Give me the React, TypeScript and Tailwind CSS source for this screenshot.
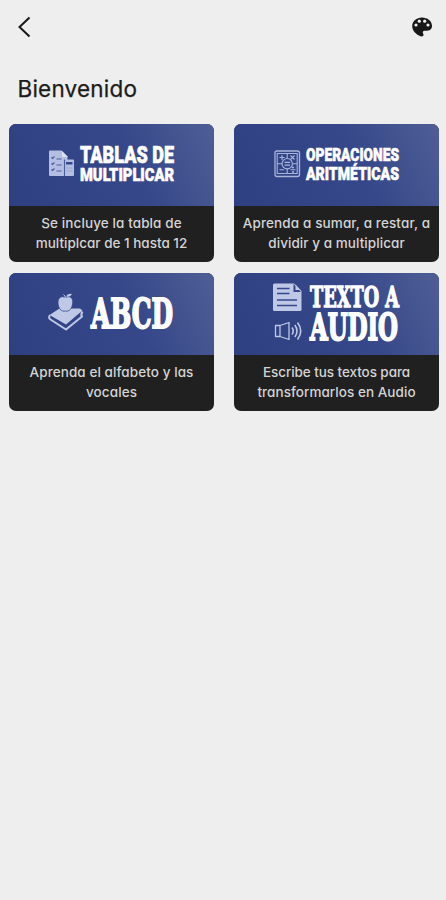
import React from "react";

type LineProps = { x: number; y: number; width: number; size: number; weight?: number; children: string };

function Lettering({ x, y, width, size, weight = 0.6, children }: LineProps) {
  return (
    <text
      x={x}
      y={y}
      textLength={width}
      lengthAdjust="spacingAndGlyphs"
      fontSize={size}
      strokeWidth={weight}
      className="fill-white stroke-white font-['Roboto',sans-serif] font-black"
    >
      {children}
    </text>
  );
}

function SlabLettering({ x, y, width, size, weight = 2, children }: LineProps) {
  return (
    <text
      x={x}
      y={y}
      textLength={width}
      lengthAdjust="spacingAndGlyphs"
      fontSize={size}
      strokeWidth={weight}
      className="fill-white stroke-white font-['DejaVu_Serif',serif] font-bold"
    >
      {children}
    </text>
  );
}

function ChecklistIcon() {
  return (
    <g>
      <path d="M41 26.500h11.500l6 6V36H55v16H41q-1 0-1-1V27.500q0-1 1-1z" fill="#b4bee0" />
      <path d="M53 27v6h6z" fill="#dbe0f2" />
      <path d="M56 35.500h8q1 0 1 1V51q0 1-1 1h-8z" fill="#b4bee0" />
      <path d="M57 38h6.500v2.500H57z" fill="#35478a" />
      <path d="M42.500 33.500l1 1 2-2M42.500 39.500l1 1 2-2M42.500 45.500l1 1 2-2M47.500 35h5M47.500 41h5M47.500 47h5M55.500 35.500V52" stroke="#4a5b99" fill="none" strokeWidth="1.100" />
      <path d="M57.500 44h6M57.500 47h6" stroke="#8f9ccb" strokeDasharray="1.500 .8" />
    </g>
  );
}

function MathIcon() {
  return (
    <g stroke="#a9b5dc" fill="none" strokeWidth="1.100">
      <rect x="41" y="27" width="24.500" height="25.500" rx="2" strokeWidth="1.300" />
      <path d="M53.200 29.500h-10v20h20v-20zM53.200 29.500v5M53.200 45v4.500M43 39.700h5M58.500 39.700h5" />
      <path d="M45.500 33.500h5M48 31v5M56.500 31.500l4 4M60.500 31.500l-4 4M45.500 45.800h4.500M56.500 45.800h5" />
      <circle cx="59" cy="43.500" r=".5" />
      <circle cx="59" cy="48" r=".5" />
      <circle cx="53.200" cy="39.700" r="5.200" fill="#34468a" />
      <path d="M50.500 38.300h5.500M50.500 41.200h5.500" strokeWidth="1.300" />
    </g>
  );
}

function BookIcon() {
  return (
    <g fill="#bfc8e6">
      <path d="M40.500 42L50.500 35.500h20.500l2.500 2-16.500 14z" />
      <path d="M41 42q-2 3 .5 4.500L57 56.500l16-13q-1.500-2 .5-5" fill="none" stroke="#bfc8e6" strokeWidth="2" strokeLinejoin="round" />
      <path d="M56.500 24.500c4-2 7.800 0 7.200 5.500-.5 5.500-3.500 9-7.200 8-4 1-7.200-2.500-7.500-8-.2-5.500 3.500-7.500 7.500-5.500z" stroke="#35478a" strokeWidth=".8" />
      <path d="M56.500 25q-.3-2.500-2-3.500" fill="none" stroke="#bfc8e6" />
      <path d="M57 23.500q1.500-3.500 6-2.500-1.500 3.500-6 2.500z" />
    </g>
  );
}

function DocumentAudioIcon() {
  return (
    <g>
      <path d="M40.500 10.500H60l7.500 7.500v18.500q0 1.500-1.500 1.500H40.500Q39 38 39 36.500V12q0-1.500 1.500-1.500z" fill="#bfc8e6" />
      <path d="M59.500 11v8H67z" fill="#35478a" />
      <path d="M61.500 11.500v5.500h5z" fill="#bfc8e6" />
      <path d="M43 15.500h12.500M43 20.500h12.500M43 27h20M43 32.500h20" stroke="#35478a" strokeWidth="1.500" />
      <g fill="none" stroke="#bfc8e6" strokeWidth="1.300" strokeLinejoin="round">
        <path d="M41.500 52.500H46v11h-4.500zM46 52.500l9-3v17l-9-3" />
        <path d="M58 54.500q2.500 3.500 0 7M60.800 52q4.500 6 0 12M63.500 49.500q6.500 8.500 0 17" strokeWidth="1.600" />
      </g>
    </g>
  );
}

function Card({ art, lines }: { art: React.ReactNode; lines: { text: string; spacing: string }[] }) {
  return (
    <button className="flex h-[138px] flex-col overflow-hidden rounded-[7px] bg-[#202020]">
      <span className="block h-[82px] w-full bg-[linear-gradient(65deg,#2e3f82_0%,#36488a_60%,#4f5e95_100%)]">
        <svg viewBox="0 0 205 82" className="block h-[82px] w-[205px]">{art}</svg>
      </span>
      <span className="flex w-full flex-col items-center pt-[7.5px] text-[13.5px] leading-[20px] font-medium text-[#d4d4d4]">
        {lines.map((l) => (
          <span key={l.text} className={"block whitespace-nowrap " + l.spacing}>{l.text}</span>
        ))}
      </span>
    </button>
  );
}

export default function App() {
  return (
    <main className="h-[900px] w-[446px] bg-[#eeeeee] font-['Inter',sans-serif] [font-feature-settings:'cv11']">
      <header className="flex h-[54px] items-center justify-between pr-[14px] pl-[17px]">
        <button aria-label="Volver">
          <svg viewBox="0 0 16 22" className="h-[22px] w-[16px]">
            <path d="M12.500 1.500L2.500 11l10 9.500" fill="none" stroke="#171717" strokeWidth="2" />
          </svg>
        </button>
        <button aria-label="Tema">
          <svg viewBox="0 0 20 20" className="h-[20px] w-[20px]">
            <path d="M10 .5C4.500.5.200 4.200.200 9c0 5.500 4.300 8 6.800 9.500 2 1.200 4.500 1.300 4.500-.5 0-1.300-.7-1.700-.7-2.700 0-1 .8-1.600 2-1.600H15c2.800 0 5-1.700 5-4.700C20 4 15.500.5 10 .5z" fill="#171717" />
            <g fill="#eeeeee"><circle cx="4" cy="8" r="1.600" /><circle cx="7.300" cy="4.200" r="1.600" /><circle cx="12.700" cy="4.200" r="1.600" /><circle cx="16" cy="8" r="1.600" /></g>
          </svg>
        </button>
      </header>
      <h1 className="h-[69.5px] pt-[18px] pl-[17.5px] text-[22.500px] leading-[34px] tracking-[0.2px] text-[#1c1c1c] [-webkit-text-stroke:0.25px_#1c1c1c]">Bienvenido</h1>
      <section className="grid grid-cols-[205px_205px] gap-x-[20px] gap-y-[11px] pl-[9px]">
        <Card
          art={<><ChecklistIcon /><Lettering x={71} y={39} width={94} size={24.500}>TABLAS DE</Lettering><Lettering x={71} y={57} width={94} size={19}>MULTIPLICAR</Lettering></>}
          lines={[{ text: "Se incluye la tabla de", spacing: "tracking-[0.1px]" }, { text: "multiplcar de 1 hasta 12", spacing: "tracking-normal" }]}
        />
        <Card
          art={<><MathIcon /><Lettering x={72} y={37} width={93} size={18.500}>OPERACIONES</Lettering><Lettering x={72} y={56} width={93} size={18.500}>ARITMÉTICAS</Lettering></>}
          lines={[{ text: "Aprenda a sumar, a restar, a", spacing: "tracking-[0.12px]" }, { text: "dividir y a multiplicar", spacing: "tracking-[0.06px]" }]}
        />
        <Card
          art={<><BookIcon /><SlabLettering x={82} y={55} width={82} size={41}>ABCD</SlabLettering></>}
          lines={[{ text: "Aprenda el alfabeto y las", spacing: "tracking-[0.08px]" }, { text: "vocales", spacing: "tracking-[0.1px]" }]}
        />
        <Card
          art={<><DocumentAudioIcon /><SlabLettering x={76} y={33.500} width={89} size={28} weight={1.3}>TEXTO A</SlabLettering><SlabLettering x={76} y={67} width={88} size={38}>AUDIO</SlabLettering></>}
          lines={[{ text: "Escribe tus textos para", spacing: "tracking-[-0.07px]" }, { text: "transformarlos en Audio", spacing: "tracking-[0.05px]" }]}
        />
      </section>
    </main>
  );
}
